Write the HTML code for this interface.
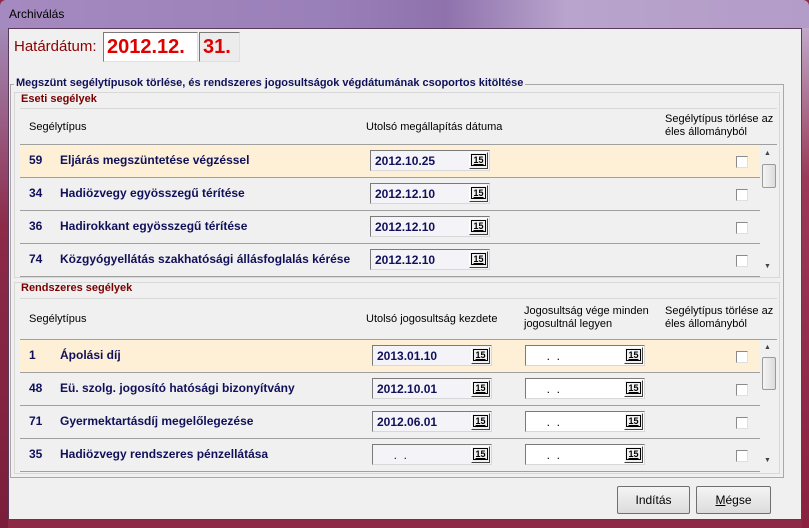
<!DOCTYPE html>
<html><head><meta charset="utf-8"><style>
*{margin:0;padding:0;box-sizing:border-box}
body{width:809px;height:528px;overflow:hidden;position:relative;background:#8c2a48;font-family:"Liberation Sans",sans-serif;font-size:11px}
.a{position:absolute}
.title{left:0;top:0;width:809px;height:28px;background:linear-gradient(90deg,#a58ac0 0%,#9a80b8 40%,#8f72ac 55%,#b8a4cc 70%,#b39cc8 100%);border-radius:6px 6px 0 0}
.client{left:8px;top:28px;width:794px;height:492px;background:#f0f0f0;border:1px solid #5a3a5a}
.lframe{left:0;top:28px;width:8px;height:500px;background:linear-gradient(180deg,#a38ab8,#8c2a48 40%,#7a1e3c)}
.rframe{left:802px;top:28px;width:7px;height:500px;background:linear-gradient(180deg,#c0a8c8,#9a3a58 30%,#8a2040)}
.hd{font-size:11px;color:#000}
.row{left:20px;width:740px;height:33px;border-bottom:1px solid #a0a0a0;background:#f0f0f0}
.row.sel{background:#fdf0d7}
.num{position:absolute;left:9px;top:8px;font-weight:bold;color:#10105a;font-size:12px}
.name{position:absolute;left:40px;top:8px;font-weight:bold;color:#10105a;font-size:12px}
.date{position:absolute;top:5px;width:120px;height:21px;border:1px solid #7a7a7a;border-right-color:#d8d8d8;border-bottom-color:#d8d8d8;background:#f4f4f8;font-weight:bold;color:#10105a;font-size:12px;padding:3px 0 0 4px}
.date.w{background:#fff;font-weight:normal;color:#000}
.cal{position:absolute;right:1px;top:1px;width:19px;height:17px;background:#f0f0f0;border:1px solid #fff;border-right-color:#404040;border-bottom-color:#404040;font-size:9px;font-weight:bold;text-align:center;line-height:14px;color:#000}
.cal span{border:1px solid #000;padding:0 1px;text-decoration:underline}
.cb{position:absolute;left:716px;top:11px;width:12px;height:12px;border:1px solid #8a8a8a;border-right-color:#e0e0e0;border-bottom-color:#e0e0e0;background:#fff}
.th{left:20px;width:757px;background:#f0f0f0;border-top:1px solid #d8d8d8;border-bottom:1px solid #a0a0a0}
.sb{left:760px;width:17px;background:#f0f0f0}
.btn{top:486px;height:28px;border:1px solid #707070;background:linear-gradient(#f4f4f4,#dcdcdc);text-align:center;line-height:26px;font-size:12px;border-radius:2px}
</style></head><body>
<div class="a title"></div>
<div class="a" style="left:9px;top:7px;font-size:12px;color:#000">Archiválás</div>
<div class="a lframe"></div><div class="a rframe"></div>
<div class="a client"></div>

<div class="a" style="left:14px;top:38px;font-size:15px;color:#8b0000">Határdátum:</div>
<div class="a" style="left:103px;top:32px;width:95px;height:30px;background:#fff;border:1px solid #7a7a7a;border-right-color:#e0e0e0;border-bottom-color:#e0e0e0;color:#e00000;font-size:20px;font-weight:bold;padding:3px 0 0 3px">2012.12.</div>
<div class="a" style="left:199px;top:32px;width:41px;height:30px;background:#ececec;border:1px solid #7a7a7a;border-right-color:#e0e0e0;border-bottom-color:#e0e0e0;color:#e00000;font-size:20px;font-weight:bold;padding:3px 0 0 3px">31.</div>

<div class="a" style="left:10px;top:84px;width:774px;height:394px;border:1px solid #a8a8a8"></div>
<div class="a" style="left:14px;top:77px;background:#f0f0f0;padding:0 2px;font-weight:bold;color:#10105a;font-size:11px">Megszünt segélytípusok törlése, és rendszeres jogosultságok végdátumának csoportos kitöltése</div>
<div class="a" style="left:14px;top:92px;width:766px;height:186px;border:1px solid #d8d8d8"></div>
<div class="a" style="left:21px;top:93px;font-weight:bold;color:#7a0000;font-size:11px">Eseti segélyek</div>
<div class="a th" style="top:108px;height:37px"></div>
<div class="a hd" style="left:29px;top:121px">Segélytípus</div>
<div class="a hd" style="left:366px;top:121px">Utolsó megállapítás dátuma</div>
<div class="a hd" style="left:665px;top:113px;line-height:13px">Segélytípus törlése az<br>éles állományból</div>

<div class="a row sel" style="top:145px"><span class="num">59</span><span class="name">Eljárás megszüntetése végzéssel</span><div class="date" style="left:350px">2012.10.25<div class="cal"><span>15</span></div></div><div class="cb"></div></div>
<div class="a row" style="top:178px"><span class="num">34</span><span class="name">Hadiözvegy egyösszegű térítése</span><div class="date" style="left:350px">2012.12.10<div class="cal"><span>15</span></div></div><div class="cb"></div></div>
<div class="a row" style="top:211px"><span class="num">36</span><span class="name">Hadirokkant egyösszegű térítése</span><div class="date" style="left:350px">2012.12.10<div class="cal"><span>15</span></div></div><div class="cb"></div></div>
<div class="a row" style="top:244px"><span class="num">74</span><span class="name">Közgyógyellátás szakhatósági állásfoglalás kérése</span><div class="date" style="left:350px">2012.12.10<div class="cal"><span>15</span></div></div><div class="cb"></div></div>
<div class="a sb" style="top:145px;height:132px"></div>
<div class="a" style="left:764px;top:150px;font-size:7px;color:#444">▲</div>
<div class="a" style="left:762px;top:164px;width:14px;height:24px;border:1px solid #9a9a9a;background:linear-gradient(90deg,#f4f4f4,#dcdcdc);border-radius:2px"></div>
<div class="a" style="left:764px;top:263px;font-size:7px;color:#444">▼</div>

<div class="a" style="left:14px;top:282px;width:766px;height:192px;border:1px solid #d8d8d8"></div>
<div class="a" style="left:21px;top:282px;font-weight:bold;color:#7a0000;font-size:11px">Rendszeres segélyek</div>
<div class="a th" style="top:298px;height:42px"></div>
<div class="a hd" style="left:29px;top:313px">Segélytípus</div>
<div class="a hd" style="left:366px;top:313px">Utolsó jogosultság kezdete</div>
<div class="a hd" style="left:524px;top:305px;line-height:13px">Jogosultság vége minden<br>jogosultnál legyen</div>
<div class="a hd" style="left:665px;top:305px;line-height:13px">Segélytípus törlése az<br>éles állományból</div>

<div class="a row sel" style="top:340px"><span class="num">1</span><span class="name">Ápolási díj</span><div class="date" style="left:352px">2013.01.10<div class="cal"><span>15</span></div></div><div class="date w" style="left:505px">&nbsp;&nbsp;&nbsp;&nbsp;&nbsp;.&nbsp;&nbsp;.<div class="cal"><span>15</span></div></div><div class="cb"></div></div>
<div class="a row" style="top:373px"><span class="num">48</span><span class="name">Eü. szolg. jogosító hatósági bizonyítvány</span><div class="date" style="left:352px">2012.10.01<div class="cal"><span>15</span></div></div><div class="date w" style="left:505px">&nbsp;&nbsp;&nbsp;&nbsp;&nbsp;.&nbsp;&nbsp;.<div class="cal"><span>15</span></div></div><div class="cb"></div></div>
<div class="a row" style="top:406px"><span class="num">71</span><span class="name">Gyermektartásdíj megelőlegezése</span><div class="date" style="left:352px">2012.06.01<div class="cal"><span>15</span></div></div><div class="date w" style="left:505px">&nbsp;&nbsp;&nbsp;&nbsp;&nbsp;.&nbsp;&nbsp;.<div class="cal"><span>15</span></div></div><div class="cb"></div></div>
<div class="a row" style="top:439px"><span class="num">35</span><span class="name">Hadiözvegy rendszeres pénzellátása</span><div class="date" style="left:352px;font-weight:normal">&nbsp;&nbsp;&nbsp;&nbsp;&nbsp;.&nbsp;&nbsp;.<div class="cal"><span>15</span></div></div><div class="date w" style="left:505px">&nbsp;&nbsp;&nbsp;&nbsp;&nbsp;.&nbsp;&nbsp;.<div class="cal"><span>15</span></div></div><div class="cb"></div></div>
<div class="a sb" style="top:340px;height:131px"></div>
<div class="a" style="left:764px;top:344px;font-size:7px;color:#444">▲</div>
<div class="a" style="left:762px;top:357px;width:14px;height:33px;border:1px solid #9a9a9a;background:linear-gradient(90deg,#f4f4f4,#dcdcdc);border-radius:2px"></div>
<div class="a" style="left:764px;top:457px;font-size:7px;color:#444">▼</div>

<div class="a btn" style="left:617px;width:73px">Indítás</div>
<div class="a btn" style="left:696px;width:75px"><u>M</u>égse</div>
</body></html>
